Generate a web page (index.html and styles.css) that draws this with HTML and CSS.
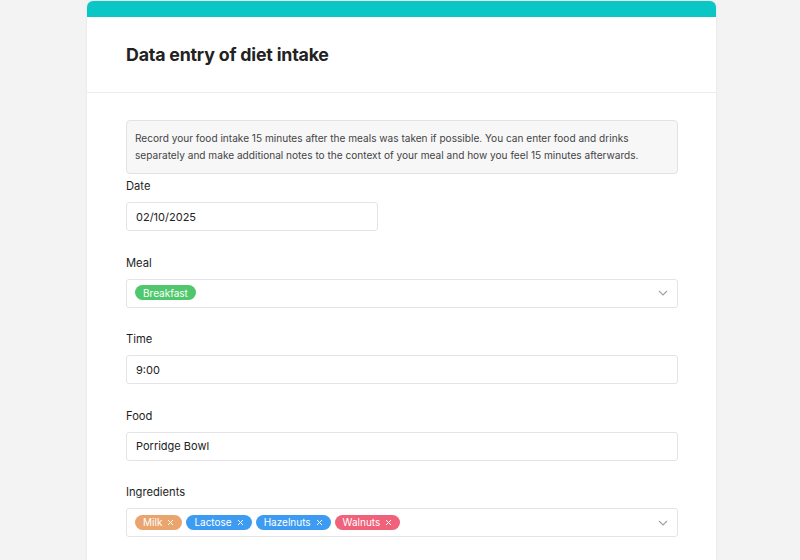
FILE: index.html
```html
<!DOCTYPE html>
<html>
<head>
<meta charset="utf-8">
<link rel="stylesheet" href="styles.css">
</head>
<body>
<div class="card">
  <div class="card-top"></div>
  <div class="card-header">
    <h1 class="title">Data entry of diet intake</h1>
  </div>
  <div class="card-body">
    <div class="info">Record your food intake 15 minutes after the meals was taken if possible. You can enter food and drinks separately and make additional notes to the context of your meal and how you feel 15 minutes afterwards.</div>
    <div class="field">
      <div class="label">Date</div>
      <div class="input input-short">02/10/2025</div>
    </div>
    <div class="field">
      <div class="label">Meal</div>
      <div class="input select">
        <div class="tags"><span class="tag tag-green">Breakfast</span></div>
        <svg class="chev" width="10" height="6" viewBox="0 0 10 6"><path d="M1 1l4 4 4-4" fill="none" stroke="#a0a0a0" stroke-width="1.1"/></svg>
      </div>
    </div>
    <div class="field">
      <div class="label">Time</div>
      <div class="input">9:00</div>
    </div>
    <div class="field">
      <div class="label">Food</div>
      <div class="input">Porridge Bowl</div>
    </div>
    <div class="field">
      <div class="label">Ingredients</div>
      <div class="input select">
        <div class="tags">
          <span class="tag tag-orange">Milk<svg class="x" width="7" height="7" viewBox="0 0 7 7"><path d="M1 1l5 5M6 1l-5 5" stroke="#fff" stroke-width="1"/></svg></span>
          <span class="tag tag-blue">Lactose<svg class="x" width="7" height="7" viewBox="0 0 7 7"><path d="M1 1l5 5M6 1l-5 5" stroke="#fff" stroke-width="1"/></svg></span>
          <span class="tag tag-blue">Hazelnuts<svg class="x" width="7" height="7" viewBox="0 0 7 7"><path d="M1 1l5 5M6 1l-5 5" stroke="#fff" stroke-width="1"/></svg></span>
          <span class="tag tag-red">Walnuts<svg class="x" width="7" height="7" viewBox="0 0 7 7"><path d="M1 1l5 5M6 1l-5 5" stroke="#fff" stroke-width="1"/></svg></span>
        </div>
        <svg class="chev" width="10" height="6" viewBox="0 0 10 6"><path d="M1 1l4 4 4-4" fill="none" stroke="#a0a0a0" stroke-width="1.1"/></svg>
      </div>
    </div>
  </div>
</div>
</body>
</html>
```
FILE: styles.css
```css
* { box-sizing: border-box; }
html, body { margin: 0; padding: 0; }
body {
  background: #f3f3f3;
  font-family: Inter, "Noto Sans", "Liberation Sans", sans-serif;
  color: #222;
  height: 560px;
  overflow: hidden;
}
.card {
  margin: 1px 0 0 87px;
  width: 629px;
  height: 600px;
  background: #fff;
  border-radius: 6px 6px 0 0;
  box-shadow: 0 0 3px rgba(0,0,0,0.08);
}
.card-top {
  height: 16px;
  background: #0ac6c4;
  border-radius: 6px 6px 0 0;
}
.card-header {
  height: 76px;
  border-bottom: 1px solid #ececec;
  padding: 27px 39px 0;
}
.title {
  margin: 0;
  font-size: 17.8px;
  line-height: 22px;
  font-weight: 700;
  color: #222;
  letter-spacing: -0.2px;
}
.card-body {
  padding: 27px 38px 0 39px;
}
.info {
  background: #f7f7f8;
  border: 1px solid #e2e2e4;
  border-radius: 4px;
  padding: 9px 8px;
  font-size: 10.1px;
  line-height: 17px;
  color: #444;
}
.field { margin-bottom: 23.5px; }
.info + .field { margin-top: 4px; }
.label {
  font-size: 11.2px;
  line-height: 16px;
  font-weight: 400;
  color: #1e1e1e;
  margin-bottom: 8px;
}
.input {
  height: 29px;
  border: 1px solid #e4e4e8;
  border-radius: 3px;
  padding: 0 9px;
  display: flex;
  align-items: center;
  font-size: 11px;
  color: #222;
}
.input-short { width: 252px; }
.select { justify-content: space-between; padding: 0 9px 0 8px; }
.tags { display: flex; gap: 4px; margin-top: -1px; }
.tag {
  display: inline-flex;
  align-items: center;
  height: 15px;
  border-radius: 8px;
  padding: 0 8px;
  color: #fff;
  font-size: 10px;
}
.tag .x { margin-left: 5px; display: block; }
.tag-green { background: #4fc76c; }
.tag-orange { background: #eaa46e; }
.tag-blue { background: #3d9cf2; }
.tag-red { background: #ef627a; }
.chev { display: block; }
```
